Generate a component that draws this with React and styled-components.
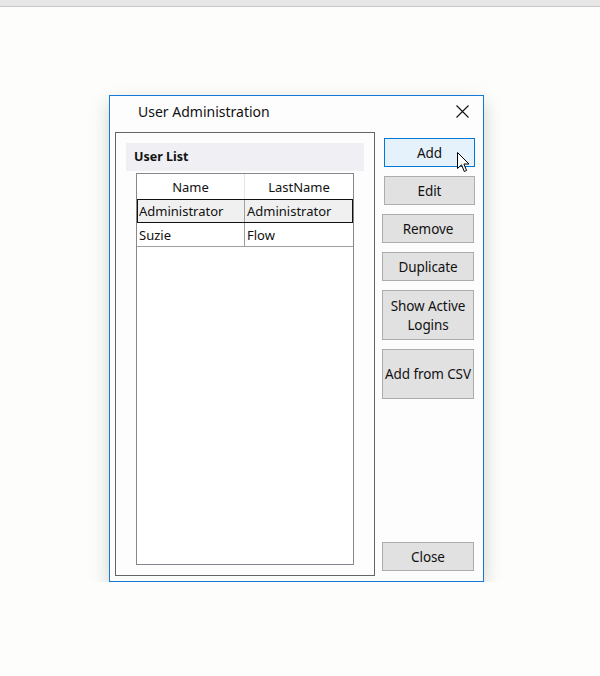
import styled, { createGlobalStyle } from "styled-components";

const USERS = [
  { name: "Administrator", lastName: "Administrator", selected: true },
  { name: "Suzie", lastName: "Flow" }
];

const BUTTONS = [
  { text: "Add", focused: true, shift: true },
  { text: "Edit", shift: true },
  { text: "Remove" },
  { text: "Duplicate" },
  { text: "Show Active Logins", tall: true },
  { text: "Add from CSV", tall: true }
];

const GlobalStyle = createGlobalStyle`
  body {
    margin: 0;
    background: #fdfdfc;
    font-family: "Noto Sans", "Liberation Sans", sans-serif;
    color: #111;
  }
`;

const TopStrip = styled.div`
  height: 6px;
  background: #e6e6e6;
  border-bottom: 1px solid #c8c8c8;
`;

const Stage = styled.div`
  padding: 88px 0 0 109px;
`;

const Window = styled.div`
  position: relative;
  box-sizing: border-box;
  width: 375px;
  height: 487px;
  background: #fdfdfd;
  outline: 1px solid #1479d8;
  outline-offset: -1px;
  box-shadow: 0 7px 18px rgba(0, 0, 0, 0.18);
  display: flex;
  flex-direction: column;
  padding: 1px;
`;

const TitleBar = styled.div`
  box-sizing: border-box;
  height: 36px;
  flex-shrink: 0;
  display: flex;
  align-items: center;
  justify-content: space-between;
  padding: 0 14px 6px 28px;
`;

const Title = styled.span`
  font-size: 14px;
  color: #111;
`;

const CloseGlyph = styled.svg`
  width: 13px;
  height: 13px;
`;

const Body = styled.div`
  flex: 1;
  display: flex;
  padding: 0 0 5px 5px;
  gap: 7px;
`;

const GroupBox = styled.div`
  box-sizing: border-box;
  width: 260px;
  border: 1px solid #646464;
  padding: 10px;
  display: flex;
  flex-direction: column;
`;

const GroupHeader = styled.div`
  height: 28px;
  flex-shrink: 0;
  background: #efeff4;
  display: flex;
  align-items: center;
  padding: 0 0 1px 8px;
  box-sizing: border-box;
  font-size: 12.5px;
  font-weight: 700;
`;

const Grid = styled.div`
  flex: 1;
  margin: 2px 10px 0;
  border: 1px solid #828790;
  background: #fff;
`;

const Row = styled.div`
  display: grid;
  grid-template-columns: 108px 108px;
  height: ${({ $header }) => ($header ? "25px" : "24px")};
  box-sizing: border-box;
  background: ${({ $selected }) => ($selected ? "#f0f0f0" : "#fff")};
  outline: ${({ $selected }) => ($selected ? "1px solid #111" : "none")};
  outline-offset: -1px;
  border-bottom: ${({ $header, $selected }) =>
    $header || $selected ? "none" : "1px solid #a0a0a0"};
`;

const Cell = styled.div`
  display: flex;
  align-items: center;
  justify-content: ${({ $header }) => ($header ? "center" : "flex-start")};
  padding-left: ${({ $header }) => ($header ? "0" : "2px")};
  font-size: 13px;
  white-space: nowrap;
  overflow: hidden;
  border-right: 1px solid ${({ $header }) => ($header ? "#e5e5e5" : "#a0a0a0")};
  &:last-child {
    border-right: none;
  }
`;

const ButtonColumn = styled.div`
  width: 93px;
  padding-top: 6px;
  display: flex;
  flex-direction: column;
  gap: 9px;
`;

const Button = styled.button`
  box-sizing: border-box;
  width: ${({ $shift }) => ($shift ? "91px" : "92px")};
  margin-left: ${({ $shift }) => ($shift ? "2px" : "0")};
  height: ${({ $tall }) => ($tall ? "50px" : "29px")};
  flex-shrink: 0;
  padding: 1px 0 0;
  background: ${({ $focused }) => ($focused ? "#e5f1fb" : "#e1e1e1")};
  border: 1px solid ${({ $focused }) => ($focused ? "#0078d7" : "#adadad")};
  font-family: "Noto Sans", "Liberation Sans", sans-serif;
  font-size: 13.5px;
  line-height: 19px;
  letter-spacing: -0.1px;
  color: #111;
  text-align: center;
`;

const CloseButton = styled(Button)`
  margin-top: auto;
  margin-bottom: 5px;
`;

const Cursor = styled.svg`
  position: absolute;
  left: 348px;
  top: 57px;
  width: 13px;
  height: 21px;
`;

export default () => (
  <>
    <GlobalStyle />
    <TopStrip />
    <Stage>
      <Window>
        <TitleBar>
          <Title>User Administration</Title>
          <CloseGlyph viewBox="0 0 13 13">
            <path d="M0.5 0.5 L12.5 12.5 M12.5 0.5 L0.5 12.5" stroke="#111" strokeWidth="1.1" />
          </CloseGlyph>
        </TitleBar>
        <Body>
          <GroupBox>
            <GroupHeader>User List</GroupHeader>
            <Grid>
              <Row $header>
                <Cell $header>Name</Cell>
                <Cell $header>LastName</Cell>
              </Row>
              {USERS.map(u => (
                <Row key={u.name} $selected={u.selected}>
                  <Cell>{u.name}</Cell>
                  <Cell>{u.lastName}</Cell>
                </Row>
              ))}
            </Grid>
          </GroupBox>
          <ButtonColumn>
            {BUTTONS.map(b => (
              <Button key={b.text} $focused={b.focused} $shift={b.shift} $tall={b.tall}>
                {b.text}
              </Button>
            ))}
            <CloseButton>Close</CloseButton>
          </ButtonColumn>
        </Body>
        <Cursor viewBox="0 0 13 21">
          <path
            d="M0.5 0.5 L0.5 16.5 L4.5 12.8 L7.3 19.5 L9.6 18.5 L6.9 12 L12 12 Z"
            fill="#fff"
            stroke="#000"
            strokeWidth="1"
            strokeLinejoin="miter"
          />
        </Cursor>
      </Window>
    </Stage>
  </>
);
